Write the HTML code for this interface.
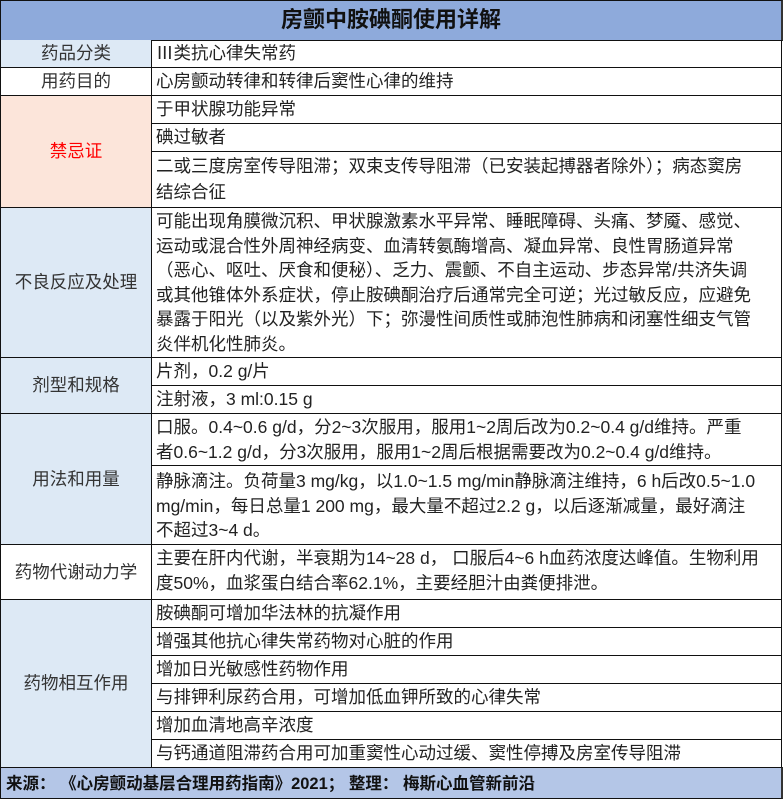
<!DOCTYPE html><html><head><meta charset="utf-8"><style>
body{margin:0;width:783px;height:799px;background:#fff;position:relative;overflow:hidden;font-family:"Liberation Sans","Noto Sans CJK SC",sans-serif;}
.c{position:absolute;box-sizing:border-box;font-size:17.5px;line-height:24.5px;color:#222;}
.l{left:0;width:152px;display:flex;align-items:center;justify-content:center;background:#dde9f5;border:1px solid #111;border-top:none;border-right:1px solid #111;color:#333;}
.r{left:151px;width:631px;border-bottom:1px solid #111;border-right:1px solid #111;padding:1px 0 0 5px;white-space:nowrap;overflow:hidden;}
</style></head><body>
<div class="c" style="left:0;top:0;width:783px;height:41px;background:#8eaadb;border:1px solid #111;border-right:2px solid #333;font-size:22px;font-weight:bold;display:flex;align-items:center;justify-content:center;color:#111">房颤中胺碘酮使用详解</div>
<div class="c l" style="top:40px;height:28px">药品分类</div>
<div class="c r" style="top:40px;height:28px"><span style="font-family:'Noto Sans CJK SC',sans-serif">Ⅲ</span>类抗心律失常药</div>
<div class="c l" style="top:68px;height:28px;background:#fff">用药目的</div>
<div class="c r" style="top:68px;height:28px">心房颤动转律和转律后窦性心律的维持</div>
<div class="c l" style="top:96px;height:112px;background:#fce5da;color:#f00">禁忌证</div>
<div class="c r" style="top:96px;height:28px">于甲状腺功能异常</div>
<div class="c r" style="top:124px;height:28px">碘过敏者</div>
<div class="c r" style="top:152px;height:56px;line-height:26px">二或三度房室传导阻滞；双束支传导阻滞（已安装起搏器者除外）；病态窦房<br>结综合征</div>
<div class="c l" style="top:208px;height:150px">不良反应及处理</div>
<div class="c r" style="top:208px;height:150px">可能出现角膜微沉积、甲状腺激素水平异常、睡眠障碍、头痛、梦魇、感觉、<br>运动或混合性外周神经病变、血清转氨酶增高、凝血异常、良性胃肠道异常<br>（恶心、呕吐、厌食和便秘）、乏力、震颤、不自主运动、步态异常/共济失调<br>或其他锥体外系症状，停止胺碘酮治疗后通常完全可逆；光过敏反应，应避免<br>暴露于阳光（以及紫外光）下；弥漫性间质性或肺泡性肺病和闭塞性细支气管<br>炎伴机化性肺炎。</div>
<div class="c l" style="top:358px;height:56px">剂型和规格</div>
<div class="c r" style="top:358px;height:28px">片剂，0.2 g/片</div>
<div class="c r" style="top:386px;height:28px">注射液，3 ml:0.15 g</div>
<div class="c l" style="top:414px;height:131px">用法和用量</div>
<div class="c r" style="top:414px;height:52px">口服。0.4~0.6 g/d，分2~3次服用，服用1~2周后改为0.2~0.4 g/d维持。严重<br>者0.6~1.2 g/d，分3次服用，服用1~2周后根据需要改为0.2~0.4 g/d维持。</div>
<div class="c r" style="top:466px;height:79px;padding-top:3px">静脉滴注。负荷量3 mg/kg，以1.0~1.5 mg/min静脉滴注维持，6 h后改0.5~1.0<br>mg/min，每日总量1 200 mg，最大量不超过2.2 g，以后逐渐减量，最好滴注<br>不超过3~4 d。</div>
<div class="c l" style="top:545px;height:55px;background:#fff">药物代谢动力学</div>
<div class="c r" style="top:545px;height:55px">主要在肝内代谢，半衰期为14~28 d， 口服后4~6 h血药浓度达峰值。生物利用<br>度50%，血浆蛋白结合率62.1%，主要经胆汁由粪便排泄。</div>
<div class="c l" style="top:600px;height:168px">药物相互作用</div>
<div class="c r" style="top:600px;height:28px">胺碘酮可增加华法林的抗凝作用</div>
<div class="c r" style="top:628px;height:28px">增强其他抗心律失常药物对心脏的作用</div>
<div class="c r" style="top:656px;height:28px">增加日光敏感性药物作用</div>
<div class="c r" style="top:684px;height:28px">与排钾利尿药合用，可增加低血钾所致的心律失常</div>
<div class="c r" style="top:712px;height:28px">增加血清地高辛浓度</div>
<div class="c r" style="top:740px;height:28px">与钙通道阻滞药合用可加重窦性心动过缓、窦性停搏及房室传导阻滞</div>
<div class="c" style="left:0;top:767px;width:783px;height:32px;background:#b4c6e7;border:1px solid #111;border-right:2px solid #333;font-size:16.5px;font-weight:bold;padding:4px 0 0 5px;color:#111;white-space:nowrap">来源：&nbsp;《心房颤动基层合理用药指南》2021；&nbsp;整理：&nbsp;梅斯心血管新前沿</div>
</body></html>
